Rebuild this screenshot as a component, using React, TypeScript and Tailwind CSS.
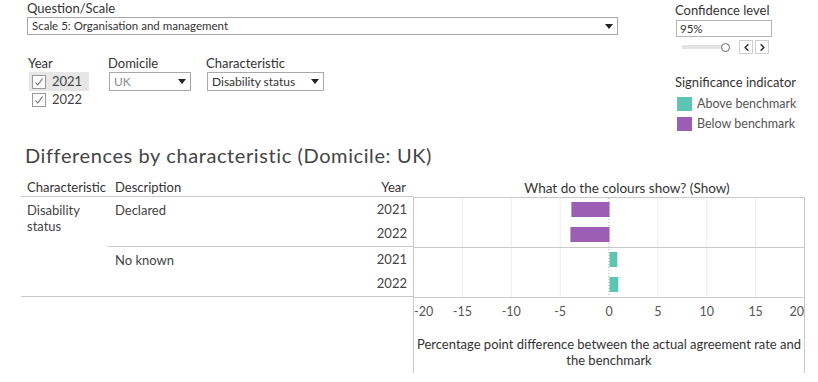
import { ChevronLeft, ChevronRight } from "lucide-react"

const TEAL = "#5cc6b3"
const PURPLE = "#9b5eb4"

const groups = [
  { description: "Declared", rows: [{ year: "2021", value: -3.9 }, { year: "2022", value: -4.0 }] },
  { description: "No known", rows: [{ year: "2021", value: 0.8 }, { year: "2022", value: 0.9 }] },
]

const ticks = [-20, -15, -10, -5, 0, 5, 10, 15, 20]

// chart spans 391px for -20..20
const px = (v: number) => (v + 20) * (391 / 40) - 1

function Arrow() {
  return (
    <svg width="8" height="5" viewBox="0 0 8 5" className="shrink-0">
      <path d="M0 0h8L4 5z" fill="#222" />
    </svg>
  )
}

function Check() {
  return (
    <span className="flex h-[14px] w-[14px] items-center justify-center border border-[#9a9a9a] bg-white">
      <svg width="10" height="10" viewBox="0 0 10 10">
        <path d="M1.5 5.5l2.3 2.5L8.5 1.5" fill="none" stroke="#666" strokeWidth="1.1" />
      </svg>
    </span>
  )
}

export default function App() {
  return (
    <div className="h-[382px] w-[818px] overflow-hidden bg-white font-['Lato','Noto_Sans',sans-serif] text-[#333]">
      {/* filters */}
      <div className="flex h-[140px]">
        <div className="w-[618px] pl-[27px] pt-[1px]">
          <div className="h-[16px] text-[13px] leading-[15px]">Question/Scale</div>
          <div className="flex h-[18px] w-[591px] items-center justify-between border border-[#a9a9a9] pl-[4px] pr-[4px] text-[11.5px]">
            <span>Scale 5: Organisation and management</span>
            <Arrow />
          </div>

          <div className="mt-[21px] flex">
            <div className="w-[81px]">
              <div className="h-[16px] pl-[1px] text-[13px] leading-[15px]">Year</div>
              <div className="ml-[2px] flex h-[19px] w-[60px] items-center bg-[#e6e6e6] pl-[3px] text-[13px] text-[#444]">
                <Check />
                <span className="ml-[6px]">2021</span>
              </div>
              <div className="ml-[2px] flex h-[18px] items-center pl-[3px] text-[13px] text-[#444]">
                <Check />
                <span className="ml-[6px]">2022</span>
              </div>
            </div>
            <div className="w-[98px]">
              <div className="h-[16px] text-[13px] leading-[15px]">Domicile</div>
              <div className="ml-[1px] flex h-[19px] w-[82px] items-center justify-between border border-[#a9a9a9] px-[4px] text-[12px] text-[#888]">
                <span>UK</span>
                <Arrow />
              </div>
            </div>
            <div>
              <div className="h-[16px] text-[13px] leading-[15px]">Characteristic</div>
              <div className="ml-[1px] flex h-[19px] w-[117px] items-center justify-between border border-[#a9a9a9] px-[4px] text-[12px]">
                <span>Disability status</span>
                <Arrow />
              </div>
            </div>
          </div>
        </div>

        <div className="ml-[57px] pt-[3px]">
          <div className="h-[17px] text-[13px] leading-[15px]">Confidence level</div>
          <div className="ml-[1px] flex h-[17px] w-[96px] items-center border border-[#b5b5b5] pl-[3px] text-[11.5px]">95%</div>
          <div className="mt-[3px] flex h-[14px] items-center">
            <div className="ml-[7px] h-[4px] w-[40px] bg-[#e3e3e3]" />
            <div className="ml-[-1px] h-[9px] w-[9px] rounded-full border border-[#666] bg-white" />
            <div className="ml-[9px] flex h-[14px] w-[14px] items-center justify-center border border-[#cfcfcf]">
              <ChevronLeft className="h-[11px] w-[11px] text-[#333]" strokeWidth={3.5} />
            </div>
            <div className="ml-[2px] flex h-[14px] w-[14px] items-center justify-center border border-[#cfcfcf]">
              <ChevronRight className="h-[11px] w-[11px] text-[#333]" strokeWidth={3.5} />
            </div>
          </div>
          <div className="mt-[21px] h-[17px] text-[13px] leading-[15px]">Significance indicator</div>
          <div className="mt-[2px] flex h-[20px] items-center text-[12.5px] text-[#555]">
            <span className="ml-[2px] h-[14px] w-[15px]" style={{ backgroundColor: TEAL }} />
            <span className="ml-[5px]">Above benchmark</span>
          </div>
          <div className="flex h-[20px] items-center text-[12.5px] text-[#555]">
            <span className="ml-[2px] h-[14px] w-[15px]" style={{ backgroundColor: PURPLE }} />
            <span className="ml-[5px]">Below benchmark</span>
          </div>
        </div>
      </div>

      {/* title */}
      <div className="h-[40px] pl-[25px] pt-[3px] text-[20px] leading-[24px] tracking-[0.6px] text-[#444]">
        Differences by characteristic (Domicile: UK)
      </div>

      {/* table + chart */}
      <div className="flex pl-[21px]">
        <div className="w-[392px]">
          <div className="flex h-[17px] items-end border-b border-[#c9c9c9] pb-[1px] text-[13px] leading-[15px]">
            <span className="w-[87px] pl-[6px]">Characteristic</span>
            <span className="flex-1 pl-[7px]">Description</span>
            <span className="pr-[7px]">Year</span>
          </div>
          <div className="flex border-b border-[#c9c9c9] text-[13px] text-[#444]">
            <div className="w-[87px] pl-[6px] pt-[5px] leading-[16px]">
              Disability
              <br />
              status
            </div>
            <div className="flex-1">
              {groups.map((g, gi) => (
                <div key={g.description} className={`flex h-[49px] ${gi === 0 ? "h-[50px] border-b border-[#c9c9c9]" : ""}`}>
                  <div className="flex-1 pl-[7px] pt-[5px] leading-[16px]">{g.description}</div>
                  <div className="flex flex-col pr-[6px] text-right">
                    {g.rows.map((r) => (
                      <div key={r.year} className="flex h-[24.5px] items-center justify-end">
                        {r.year}
                      </div>
                    ))}
                  </div>
                </div>
              ))}
            </div>
          </div>
        </div>

        <div className="w-[392px]">
          <div className="flex h-[17px] items-end justify-center pb-[1px] pl-[36px] text-[13.5px] leading-[15px] text-[#333]">
            What do the colours show? (Show)
          </div>
          <div className="h-[101px] border border-[#c9c9c9]">
            <svg width="390" height="99" viewBox="0 0 390 99">
              {ticks.slice(1, -1).map((t) =>
                t === 0 ? (
                  <line key={t} x1={px(t) + 0.5} x2={px(t) + 0.5} y1="0" y2="99" stroke="#aaa" strokeDasharray="1 2" />
                ) : (
                  <line key={t} x1={px(t) + 0.5} x2={px(t) + 0.5} y1="0" y2="99" stroke="#ececec" />
                )
              )}
              <line x1="0" x2="390" y1="49.5" y2="49.5" stroke="#c9c9c9" />
              {groups.flatMap((g, gi) =>
                g.rows.map((r, ri) => {
                  const y = [4, 29, 54, 79][gi * 2 + ri]
                  const x0 = px(0) + 1
                  const x1 = px(r.value) + 1
                  return (
                    <rect
                      key={`${gi}-${ri}`}
                      x={Math.min(x0, x1)}
                      y={y}
                      width={Math.abs(x1 - x0)}
                      height="15"
                      fill={r.value < 0 ? PURPLE : TEAL}
                    />
                  )
                })
              )}
            </svg>
          </div>
          <div className="h-[75px] border-x border-[#c9c9c9]">
            <svg width="390" height="26" viewBox="0 0 390 26" className="overflow-hidden">
              {ticks.map((t) => (
                <text
                  key={t}
                  x={t === -20 ? 0 : t === 20 ? 390 : px(t) + 0.5}
                  y="18"
                  fontSize="12.5"
                  fill="#555"
                  textAnchor={t === -20 ? "start" : t === 20 ? "end" : "middle"}
                  fontFamily="Lato, 'Noto Sans', sans-serif"
                >
                  {t}
                </text>
              ))}
            </svg>
            <div className="mt-[12px] text-center text-[13px] leading-[16px] text-[#333]">
              Percentage point difference between the actual agreement rate and
              <br />
              the benchmark
            </div>
          </div>
        </div>
      </div>
    </div>
  )
}
